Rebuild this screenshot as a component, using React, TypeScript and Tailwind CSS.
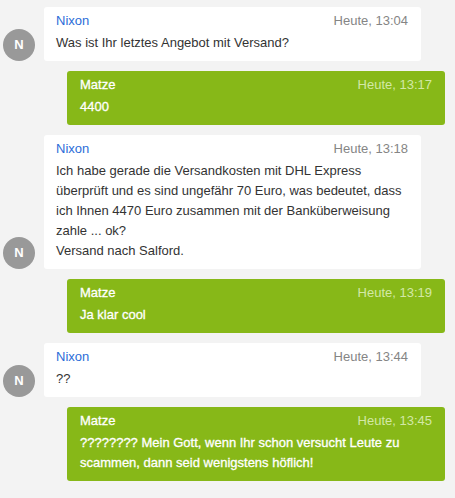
import React from "react";

type Message = {
  from: "them" | "me";
  name: string;
  time: string;
  lines: string[];
};

const messages: Message[] = [
  { from: "them", name: "Nixon", time: "Heute, 13:04", lines: ["Was ist Ihr letztes Angebot mit Versand?"] },
  { from: "me", name: "Matze", time: "Heute, 13:17", lines: ["4400"] },
  {
    from: "them",
    name: "Nixon",
    time: "Heute, 13:18",
    lines: [
      "Ich habe gerade die Versandkosten mit DHL Express überprüft und es sind ungefähr 70 Euro, was bedeutet, dass ich Ihnen 4470 Euro zusammen mit der Banküberweisung zahle ... ok?",
      "Versand nach Salford.",
    ],
  },
  { from: "me", name: "Matze", time: "Heute, 13:19", lines: ["Ja klar cool"] },
  { from: "them", name: "Nixon", time: "Heute, 13:44", lines: ["??"] },
  {
    from: "me",
    name: "Matze",
    time: "Heute, 13:45",
    lines: ["???????? Mein Gott, wenn Ihr schon versucht Leute zu scammen, dann seid wenigstens höflich!"],
  },
];

function Bubble({ msg }: { msg: Message }) {
  const mine = msg.from === "me";
  return (
    <div
      className={
        mine
          ? "flex-1 rounded-[3px] bg-[#87b818] pl-[13px] pr-[13px] pt-[4px] pb-[8px]"
          : "flex-1 rounded-[3px] bg-white pl-[12px] pr-[13px] pt-[4px] pb-[8px]"
      }
    >
      <div className="flex items-center justify-between leading-[20px]">
        <span className={mine ? "text-white [-webkit-text-stroke:0.3px_white]" : "text-[#2b6cd8]"}>{msg.name}</span>
        <span className={mine ? "text-[#d3e8a6]" : "text-[#858585]"}>{msg.time}</span>
      </div>
      <div
        className={
          mine
            ? "mt-[2px] leading-[20px] text-white [-webkit-text-stroke:0.3px_white]"
            : "mt-[2px] leading-[20px] text-[#333]"
        }
      >
        {msg.lines.map((l, i) => (
          <p key={i}>{l}</p>
        ))}
      </div>
    </div>
  );
}

export default function App() {
  return (
    <div
      className="flex min-h-screen flex-col gap-[10px] bg-[#f3f3f3] pt-[7px] pb-4 text-[13px]"
      style={{ fontFamily: '"Liberation Sans", Arial, sans-serif' }}
    >
      {messages.map((m, i) =>
        m.from === "them" ? (
          <div key={i} className="flex items-end gap-[9px] pl-[3px] pr-[34px]">
            <div className="flex h-8 w-8 shrink-0 items-center justify-center rounded-full bg-[#999] text-[13px] font-bold text-white">
              N
            </div>
            <Bubble msg={m} />
          </div>
        ) : (
          <div key={i} className="flex pl-[67px] pr-[10px]">
            <Bubble msg={m} />
          </div>
        )
      )}
    </div>
  );
}
